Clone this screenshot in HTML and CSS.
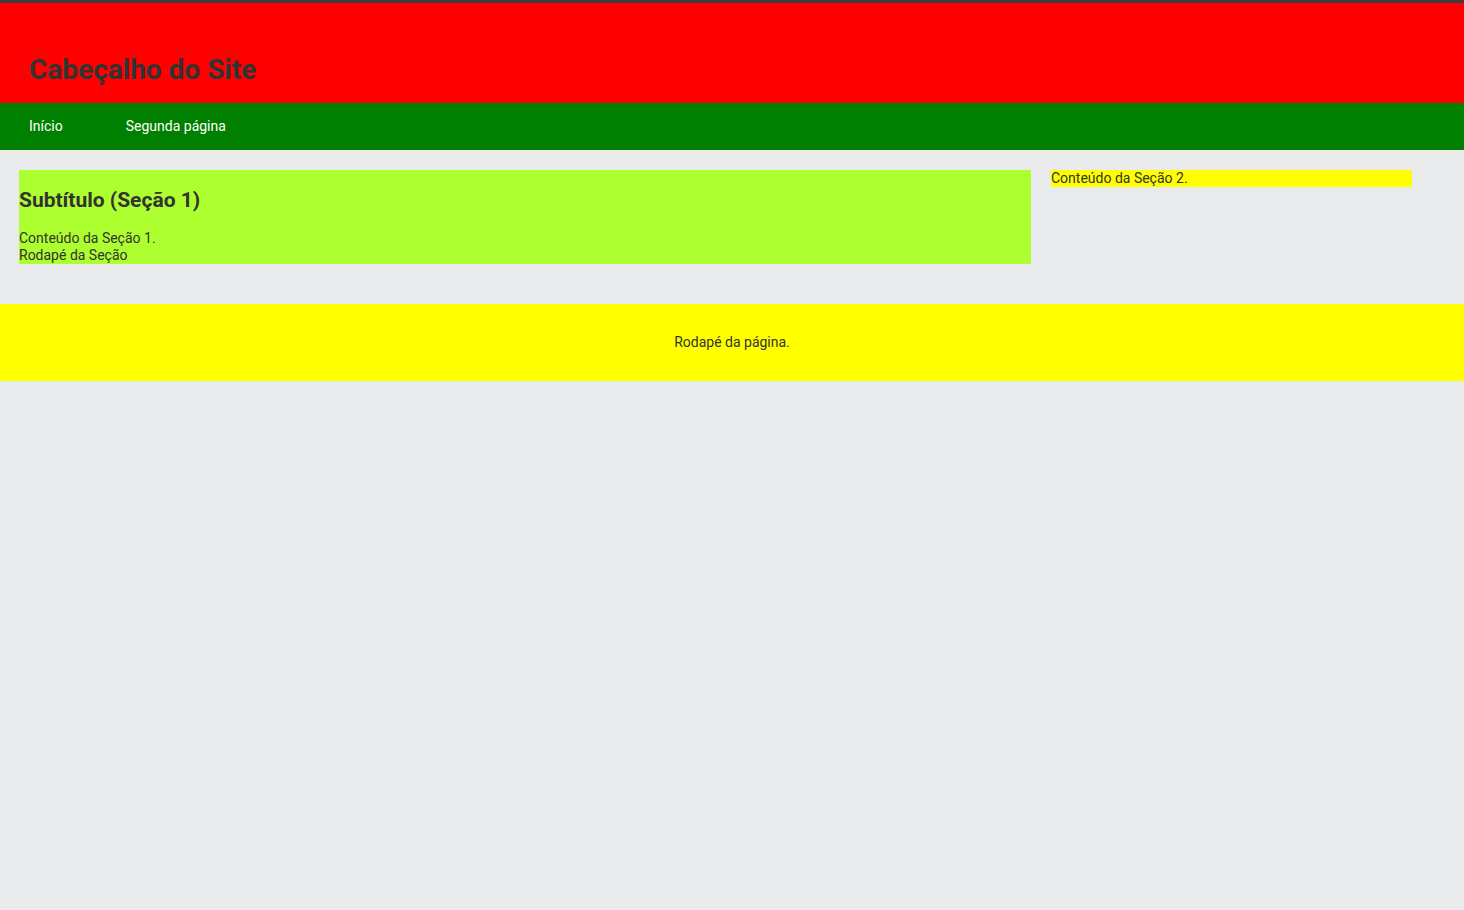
FILE: index.html
```html
<!DOCTYPE html>
<html lang="pt-BR">
<head>
<meta charset="utf-8">
<title>Cabeçalho do Site</title>
<link rel="stylesheet" href="styles.css">
</head>
<body>
  <header class="site-header">
    <h1 class="site-title">Cabeçalho do Site</h1>
  </header>
  <nav class="site-nav">
    <a class="nav-link" href="#">Início</a>
    <a class="nav-link" href="#">Segunda página</a>
  </nav>
  <main class="site-main">
    <section class="section-one">
      <h2 class="section-title">Subtítulo (Seção 1)</h2>
      <p class="section-text">Conteúdo da Seção 1.</p>
      <footer class="section-footer">Rodapé da Seção</footer>
    </section>
    <aside class="section-two">Conteúdo da Seção 2.</aside>
  </main>
  <footer class="site-footer">Rodapé da página.</footer>
</body>
</html>
```
FILE: styles.css
```css
* { box-sizing: border-box; }
html, body { margin: 0; padding: 0; }
body {
  background: #e9eaec;
  font-family: Roboto, "Liberation Sans", sans-serif;
  font-size: 14px;
  line-height: 17px;
  color: #333;
  border-top: 3px solid #3d3d3d;
}
.site-header {
  background: #ff0000;
  height: 100px;
  padding: 50px 29px 0;
}
.site-title {
  margin: 0;
  font-size: 28px;
  line-height: 33px;
  font-weight: 700;
  color: #333;
}
.site-nav {
  background: #008000;
  height: 47px;
  display: flex;
  align-items: center;
  padding-left: 29px;
  gap: 63px;
}
.nav-link {
  color: #fff;
  text-decoration: none;
  font-size: 14px;
}
.site-main {
  display: grid;
  grid-template-columns: 1012px 361px;
  column-gap: 20px;
  align-items: start;
  padding: 20px 0 40px 19px;
}
.section-one {
  background: #adff2f;
  padding: 18px 0 0;
}
.section-title {
  margin: 0 0 17px;
  font-size: 21px;
  line-height: 25px;
  font-weight: 700;
}
.section-text { margin: 0; }
.section-footer { margin: 0; }
.section-two {
  background: #ffff00;
}
.site-footer {
  background: #ffff00;
  height: 77px;
  display: flex;
  align-items: center;
  justify-content: center;
}
```
